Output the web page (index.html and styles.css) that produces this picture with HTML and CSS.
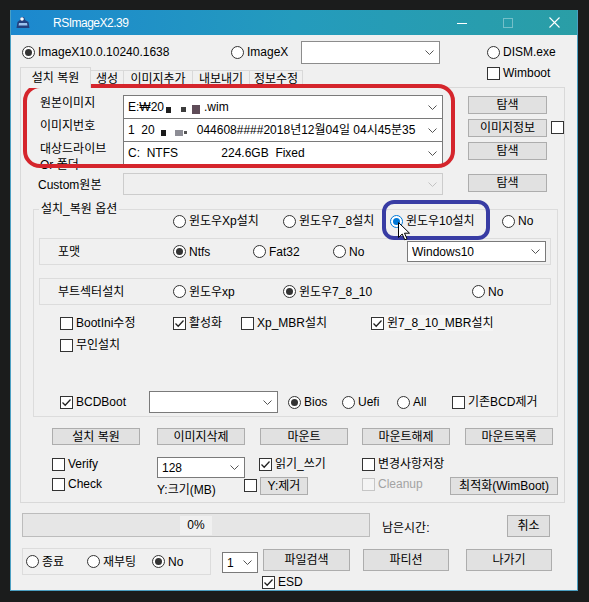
FILE: index.html
```html
<!DOCTYPE html>
<html lang="ko">
<head>
<meta charset="utf-8">
<title>RSImageX2.39</title>
<link rel="stylesheet" href="styles.css">
</head>
<body>
<div class="screen">
  <div class="window">
    <div class="titlebar">
      <svg class="app-icon" width="14" height="13" viewBox="0 0 14 13"><path d="M5 1 L8 1 L9 4 L12.5 6 L13.5 12 L0.5 12 L1.5 6 L4 4 Z" fill="#23407e"/><circle cx="6" cy="3" r="1.8" fill="#fff"/><path d="M3 7 L11 7 L11.5 9.5 L2.5 9.5 Z" fill="#9cc3ee"/></svg>
      <span class="title">RSImageX2.39</span>
      <div class="caps">
        <span class="cap"><svg width="10" height="10" viewBox="0 0 10 10"><path d="M0 5.5 H10" stroke="#fff" stroke-width="1"/></svg></span>
        <span class="cap dim"><svg width="10" height="10" viewBox="0 0 10 10"><rect x="0.5" y="0.5" width="9" height="9" fill="none" stroke="#fff" stroke-width="1"/></svg></span>
        <span class="cap"><svg width="11" height="11" viewBox="0 0 11 11"><path d="M0.5 0.5 L10.5 10.5 M10.5 0.5 L0.5 10.5" stroke="#fff" stroke-width="1.1"/></svg></span>
      </div>
    </div>

    <div class="client">
      <div class="row1">
        <label class="radio on r-imgx10"><span class="rb"></span><span class="clip">ImageX10.0.10240.1638</span></label>
        <label class="radio r-imgx"><span class="rb"></span>ImageX</label>
        <div class="combo c-top"><span class="val"></span><svg width="9" height="5" viewBox="0 0 9 5"><path d="M0.5 0.5 L4.5 4.5 L8.5 0.5" fill="none" stroke="#555"/></svg></div>
        <label class="radio r-dism"><span class="rb"></span>DISM.exe</label>
      </div>

      <div class="row2">
        <div class="tabs">
          <div class="tab sel t1">설치 복원</div>
          <div class="tab t2">생성</div>
          <div class="tab t3">이미지추가</div>
          <div class="tab t4">내보내기</div>
          <div class="tab t5">정보수정</div>
        </div>
        <label class="check wimboot"><span class="cb"></span>Wimboot</label>
      </div>

      <div class="panel">
        <div class="srcrows">
          <div class="frow">
            <span class="flabel">원본이미지</span>
            <div class="combo wide"><span class="val">E:₩20<span class="smudge"><i class="d1"></i><i class="d2"></i><i class="d3"></i></span>.wim</span><svg width="9" height="5" viewBox="0 0 9 5"><path d="M0.5 0.5 L4.5 4.5 L8.5 0.5" fill="none" stroke="#555"/></svg></div>
            <div class="btn fbtn">탐색</div>
          </div>
          <div class="frow">
            <span class="flabel">이미지번호</span>
            <div class="combo wide"><span class="val">1  20<span class="smudge s2"><i class="d4"></i><i class="d5"></i><i class="d6"></i></span>044608####2018년12월04일 04시45분35</span><svg width="9" height="5" viewBox="0 0 9 5"><path d="M0.5 0.5 L4.5 4.5 L8.5 0.5" fill="none" stroke="#555"/></svg></div>
            <div class="btn fbtn">이미지정보</div>
            <span class="cb info-cb"></span>
          </div>
          <div class="frow">
            <span class="flabel narrow">대상드라이브 Or 폴더</span>
            <div class="combo wide"><span class="val">C:  NTFS             224.6GB  Fixed</span><svg width="9" height="5" viewBox="0 0 9 5"><path d="M0.5 0.5 L4.5 4.5 L8.5 0.5" fill="none" stroke="#555"/></svg></div>
            <div class="btn fbtn">탐색</div>
          </div>
        </div>

        <div class="custom-row">
          <span class="flabel custom-label">Custom원본</span>
          <div class="combo wide dis"><span class="val"></span><svg width="9" height="5" viewBox="0 0 9 5"><path d="M0.5 0.5 L4.5 4.5 L8.5 0.5" fill="none" stroke="#c2c2c2"/></svg></div>
          <div class="btn fbtn">탐색</div>
        </div>

        <div class="group">
          <div class="g-head">
            <span class="g-title">설치_복원 옵션</span>
            <label class="radio"><span class="rb"></span>윈도우Xp설치</label>
            <label class="radio"><span class="rb"></span>윈도우7_8설치</label>
            <label class="radio on blue"><span class="rb"></span>윈도우10설치</label>
            <label class="radio"><span class="rb"></span>No</label>
          </div>

          <div class="ibox fmt">
            <span class="ilabel">포맷</span>
            <label class="radio on"><span class="rb"></span>Ntfs</label>
            <label class="radio"><span class="rb"></span>Fat32</label>
            <label class="radio"><span class="rb"></span>No</label>
            <div class="combo c-win"><span class="val">Windows10</span><svg width="9" height="5" viewBox="0 0 9 5"><path d="M0.5 0.5 L4.5 4.5 L8.5 0.5" fill="none" stroke="#555"/></svg></div>
          </div>

          <div class="ibox boot">
            <span class="ilabel">부트섹터설치</span>
            <label class="radio"><span class="rb"></span>윈도우xp</label>
            <label class="radio on"><span class="rb"></span>윈도우7_8_10</label>
            <label class="radio"><span class="rb"></span>No</label>
          </div>

          <div class="crow crow1">
            <label class="check"><span class="cb"></span>BootIni수정</label>
            <label class="check"><span class="cb"><svg width="11" height="11" viewBox="0 0 11 11"><path d="M1.5 5.5 L4.2 8.2 L9.5 2.5" fill="none" stroke="#222" stroke-width="1.3"/></svg></span>활성화</label>
            <label class="check"><span class="cb"></span>Xp_MBR설치</label>
            <label class="check clipbox"><span class="cb"><svg width="11" height="11" viewBox="0 0 11 11"><path d="M1.5 5.5 L4.2 8.2 L9.5 2.5" fill="none" stroke="#222" stroke-width="1.3"/></svg></span>윈7_8_10_MBR설치</label>
          </div>

          <div class="crow crow2">
            <label class="check"><span class="cb"></span>무인설치</label>
          </div>

          <div class="crow bcd">
            <label class="check"><span class="cb"><svg width="11" height="11" viewBox="0 0 11 11"><path d="M1.5 5.5 L4.2 8.2 L9.5 2.5" fill="none" stroke="#222" stroke-width="1.3"/></svg></span>BCDBoot</label>
            <div><div class="combo c-bcd"><span class="val"></span><svg width="9" height="5" viewBox="0 0 9 5"><path d="M0.5 0.5 L4.5 4.5 L8.5 0.5" fill="none" stroke="#555"/></svg></div></div>
            <label class="radio on"><span class="rb"></span>Bios</label>
            <label class="radio"><span class="rb"></span>Uefi</label>
            <label class="radio"><span class="rb"></span>All</label>
            <label class="check"><span class="cb"></span>기존BCD제거</label>
          </div>
        </div>

        <div class="arow">
          <div class="btn ab a1">설치 복원</div>
          <div class="btn ab a2">이미지삭제</div>
          <div class="btn ab a3">마운트</div>
          <div class="btn ab a4">마운트해제</div>
          <div class="btn ab a5">마운트목록</div>
        </div>

        <div class="vrow">
          <label class="check v1"><span class="cb"></span>Verify</label>
          <div class="combo c128"><span class="val">128</span><svg width="9" height="5" viewBox="0 0 9 5"><path d="M0.5 0.5 L4.5 4.5 L8.5 0.5" fill="none" stroke="#555"/></svg></div>
          <label class="check v2"><span class="cb"><svg width="11" height="11" viewBox="0 0 11 11"><path d="M1.5 5.5 L4.2 8.2 L9.5 2.5" fill="none" stroke="#222" stroke-width="1.3"/></svg></span>읽기_쓰기</label>
          <label class="check v3"><span class="cb"></span>변경사항저장</label>
        </div>

        <div class="krow">
          <label class="check k1"><span class="cb"></span>Check</label>
          <span class="ysize">Y:크기(MB)</span>
          <label class="check k-cb"><span class="cb"></span></label>
          <div class="btn yrm">Y:제거</div>
          <label class="check cln"><span class="cb dis"></span>Cleanup</label>
          <div class="btn opt">최적화(WimBoot)</div>
        </div>
      </div>

      <div class="prow">
        <div class="pbar"><span>0%</span></div>
        <span class="remain">남은시간:</span>
        <div class="btn cancel">취소</div>
      </div>

      <div class="bottom">
        <div class="bgroup">
          <label class="radio"><span class="rb"></span>종료</label>
          <label class="radio"><span class="rb"></span>재부팅</label>
          <label class="radio on"><span class="rb"></span>No</label>
        </div>
        <div class="combo c-one"><span class="val">1</span><svg width="9" height="5" viewBox="0 0 9 5"><path d="M0.5 0.5 L4.5 4.5 L8.5 0.5" fill="none" stroke="#555"/></svg></div>
        <div class="bcol">
          <div class="brow">
            <div class="btn bb1">파일검색</div>
            <div class="btn bb2">파티션</div>
            <div class="btn bb3">나가기</div>
          </div>
          <label class="check esd"><span class="cb"><svg width="11" height="11" viewBox="0 0 11 11"><path d="M1.5 5.5 L4.2 8.2 L9.5 2.5" fill="none" stroke="#222" stroke-width="1.3"/></svg></span>ESD</label>
        </div>
      </div>
    </div>
  </div>

  <div class="anno anno-red"></div>
  <div class="anno anno-blue"></div>
  <svg class="cursor" width="13" height="19" viewBox="0 0 13 19"><path d="M0.5 0.5 L0.5 15.5 L4.2 12 L6.8 17.8 L9 16.8 L6.5 11.2 L11.5 11.2 Z" fill="#fff" stroke="#000" stroke-width="1"/></svg>
</div>
</body>
</html>
```

FILE: styles.css
```css
* { box-sizing: border-box; }
html, body { margin: 0; padding: 0; }
body {
  background: #1b1c1c;
  font-family: "Liberation Sans", "Noto Sans CJK KR", sans-serif;
  font-size: 12px;
  line-height: 16px;
  color: #000;
}
.screen {
  position: relative;
  width: 589px;
  height: 602px;
  padding: 10px 0 0 10px;
  background: #1b1c1c;
  overflow: hidden;
}
.window {
  width: 568px;
  height: 581px;
  border: 1px solid #4b9fc2;
  border-top: 0;
  background: #f0f0f0;
  display: flex;
  flex-direction: column;
}
.titlebar {
  height: 25px;
  flex: none;
  display: flex;
  align-items: center;
  background: linear-gradient(90deg, #1c88cf 0%, #249bbd 50%, #2a9ea6 100%);
  color: #fff;
}
.app-icon { margin-left: 5px; flex: none; }
.title { margin-left: 23px; letter-spacing: -0.5px; }
.caps { margin-left: auto; display: flex; }
.cap { width: 46px; height: 25px; display: flex; align-items: center; justify-content: center; }
.cap.dim { opacity: 0.35; }

.client { flex: 1; display: flex; flex-direction: column; }

/* controls */
.radio, .check { display: flex; align-items: center; white-space: nowrap; flex: none; }
.rb {
  width: 13px; height: 13px; flex: none;
  border: 1px solid #333; border-radius: 50%;
  background: #fff; margin-right: 3px;
  display: flex; align-items: center; justify-content: center;
}
.radio.on .rb::after { content: ""; width: 7px; height: 7px; border-radius: 50%; background: #333; }
.radio.blue .rb { border-color: #0078d7; }
.radio.blue .rb::after { background: #0078d7; }
.cb {
  width: 13px; height: 13px; flex: none;
  border: 1px solid #333; background: #fff; margin-right: 3px;
  display: flex; align-items: center; justify-content: center;
}
.cb.dis { border-color: #c6c6c6; background: #f4f4f4; }
.clip { flex: 1; min-width: 0; overflow: hidden; }
.combo {
  display: flex; align-items: center; flex: none;
  background: #fff; border: 1px solid #7a7a7a; padding-left: 4px;
}
.combo .val { flex: 1; min-width: 0; overflow: hidden; white-space: pre; }
.combo svg { flex: none; margin: 0 5px 0 4px; }
.combo.dis { background: #efefef; border-color: #cccccc; }
.btn {
  display: flex; align-items: center; justify-content: center; flex: none;
  background: #e1e1e1; border: 1px solid #adadad; white-space: nowrap;
}

/* row 1 */
.row1 { display: flex; align-items: center; margin-top: 5px; height: 24px; flex: none; }
.r-imgx10 { margin-left: 11px; width: 148px; }
.r-imgx { margin-left: 61px; width: 60px; }
.c-top { margin-left: 10px; width: 139px; height: 23px; border-color: #8c8c8c; }
.r-dism { margin-left: 47px; }

/* row 2: tabs */
.row2 { display: flex; height: 23px; flex: none; }
.tabs { display: flex; align-items: flex-end; margin-left: 9px; align-self: flex-end; }
.tab {
  height: 17px; display: flex; align-items: center; justify-content: center;
  border: 1px solid #d9d9d9; border-bottom: 0; border-left: 0;
  background: #f0f0f0; white-space: nowrap;
}
.tab.sel {
  height: 21px; margin-bottom: -1px; border-left: 1px solid #d9d9d9;
  position: relative; z-index: 1; background: #f0f0f0;
}
.t1 { width: 71px; }
.t2 { width: 33px; }
.t3 { width: 69px; }
.t4 { width: 57px; }
.t5 { width: 53px; }
.wimboot { margin-left: 184px; align-self: flex-start; margin-top: 1px; }

/* panel */
.panel { margin-left: 9px; width: 545px; height: 416px; border: 1px solid #d9d9d9; flex: none; }
.srcrows { margin-top: 7px; }
.frow { display: flex; align-items: flex-start; height: 23px; }
.flabel { margin-left: 19px; width: 83px; flex: none; }
.flabel.narrow { width: 76px; margin-right: 7px; }
.combo.wide { width: 320px; height: 24px; }
.fbtn { margin: 1px 0 0 25px; width: 79px; height: 18px; }
.info-cb { margin: 3px 0 0 4px; }
.smudge { display: inline-flex; align-items: center; width: 40px; height: 12px; vertical-align: -2px; }
.smudge.s2 { width: 42px; }
.smudge i { display: block; flex: none; }
.d1 { width: 5px; height: 6px; background: #1e1e1e; margin-left: 2px; }
.d2 { width: 5px; height: 5px; background: #3c3c3c; margin-left: 10px; }
.d3 { width: 8px; height: 9px; background: #5f4c58; margin-left: 6px; }
.d4 { width: 5px; height: 6px; background: #1a1a1a; margin-left: 6px; }
.d5 { width: 8px; height: 6px; background: #8d8d95; margin-left: 9px; }
.d6 { width: 3px; height: 3px; background: #555; margin-left: 1px; }

.custom-row { display: flex; align-items: flex-start; margin-top: 9px; height: 22px; }
.custom-label { margin: 4px 0 0 17px; width: 85px; }
.custom-row .combo { height: 22px; }

/* group box */
.group { margin: 14px 0 0 12px; width: 525px; height: 208px; border: 1px solid #dcdcdc; }
.g-head { display: grid; grid-template-columns: 139px 110px 107px 112px 1fr; align-items: start; height: 19px; }
.g-head .radio { margin-top: 3px; }
.g-title { justify-self: start; margin: -9px 0 0 5px; padding: 0 2px; background: #f0f0f0; }
.ibox { margin: 9px 0 0 5px; width: 512px; height: 27px; border: 1px solid #dcdcdc; display: grid; align-items: center; }
.ilabel { padding-left: 18px; }
.fmt { grid-template-columns: 133px 80px 80px 74px 139px; }
.c-win { height: 21px; width: 139px; }
.boot { margin-top: 13px; grid-template-columns: 133px 110px 189px 1fr; }
.crow { display: grid; height: 16px; padding-left: 26px; align-items: center; }
.crow1 { margin-top: 10px; grid-template-columns: 113px 68px 130px 122px; }
.clipbox { background: #f5f5f5; }
.crow2 { margin-top: 6px; grid-template-columns: 113px; }
.bcd { margin-top: 38px; height: 22px; grid-template-columns: 89px 139px 54px 55px 55px auto; }
.c-bcd { width: 129px; height: 22px; }

/* action buttons */
.arow { display: flex; margin-top: 11px; height: 17px; }
.ab { width: 88px; height: 17px; }
.a1 { margin-left: 31px; }
.a2 { margin-left: 17px; }
.a3 { margin-left: 15px; }
.a4 { margin-left: 14px; }
.a5 { margin-left: 15px; }

.vrow { display: flex; align-items: flex-start; margin-top: 12px; height: 20px; }
.v1 { margin: -1px 0 0 31px; width: 105px; }
.c128 { width: 88px; height: 21px; }
.v2 { margin: -1px 0 0 14px; width: 103px; }
.v3 { margin-top: -1px; }

.krow { display: flex; align-items: flex-start; height: 18px; }
.k1 { margin: -1px 0 0 31px; width: 105px; }
.ysize { margin-top: 5px; width: 87px; flex: none; }
.k-cb { margin-top: 2px; width: 16px; }
.yrm { width: 48px; height: 18px; }
.cln { margin: -1px 0 0 54px; width: 88px; color: #a3a3a3; }
.opt { width: 108px; height: 18px; }

/* progress */
.prow { display: flex; align-items: flex-start; margin-top: 10px; height: 24px; flex: none; }
.pbar {
  margin-left: 11px; width: 348px; height: 24px;
  background: #e6e6e6; border: 1px solid #bcbcbc;
  display: flex; align-items: center; justify-content: center;
}
.pbar span { background: #f0f0f0; padding: 1px 7px; line-height: 17px; }
.remain { margin: 7px 0 0 12px; width: 125px; flex: none; }
.cancel { margin-top: 2px; width: 43px; height: 22px; }

/* bottom */
.bottom { display: flex; align-items: flex-start; margin-top: 11px; height: 42px; flex: none; }
.bgroup {
  margin-left: 11px; width: 189px; height: 27px; border: 1px solid #dcdcdc;
  display: grid; grid-template-columns: 61px 65px auto; align-items: center; padding-left: 3px;
}
.c-one { margin: 4px 0 0 11px; width: 36px; height: 21px; }
.bcol { margin-left: 5px; display: flex; flex-direction: column; }
.brow { display: flex; margin-top: 1px; }
.bb1 { width: 87px; height: 22px; }
.bb2 { margin-left: 13px; width: 86px; height: 22px; }
.bb3 { margin-left: 17px; width: 86px; height: 22px; }
.esd { margin: 3px 0 0 -1px; }

/* annotations drawn over the screenshot */
.anno { position: absolute; border-style: solid; }
.anno-red { left: 23px; top: 84px; width: 432px; height: 84px; border-width: 4px; border-color: #d5252c; border-radius: 17px; }
.anno-blue { left: 382px; top: 200px; width: 108px; height: 40px; border-width: 4px; border-color: #383ca4; border-radius: 12px; }
.cursor { position: absolute; left: 398px; top: 222px; }
```
